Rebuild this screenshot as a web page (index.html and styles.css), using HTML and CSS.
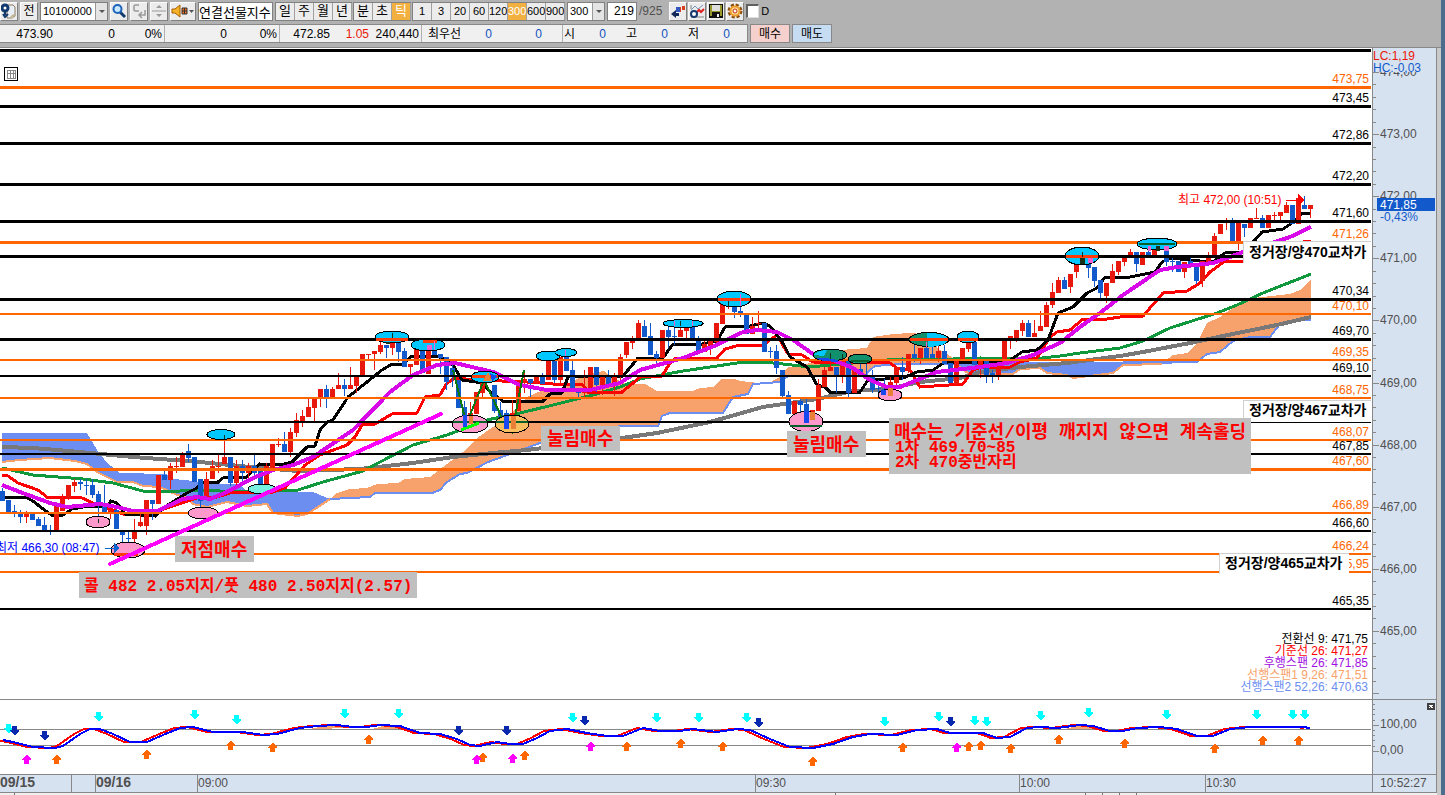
FILE: index.html
```html
<!DOCTYPE html>
<html lang="ko">
<head>
<meta charset="utf-8">
<title>연결선물지수</title>
<link rel="stylesheet" href="styles.css">
</head>
<body>
<div class="window">
<header class="toolbar">
  <button class="tool" aria-label="설정"><svg width="16" height="16" viewBox="0 0 16 16"><path d="M6 2h6l2 2v9l-3 2H6z" fill="#e8eef6" stroke="#8a7a60"/><path d="M9 15q1-4 5-4l-2 4z" fill="#c8b898"/><circle cx="4" cy="5" r="3" fill="#fff" stroke="#123a6e" stroke-width="3"/><path d="M4 9v3M2 11l2 3 3-3" fill="none" stroke="#123a6e" stroke-width="2"/></svg></button>
  <button class="tool">전</button>
  <div class="combo code"><select aria-label="종목코드"><option>10100000</option></select><i class="arrow"></i></div>
  <button class="tool" aria-label="검색"><svg width="16" height="16" viewBox="0 0 16 16"><path d="M9 9l5 5" stroke="#123a6e" stroke-width="3"/><circle cx="6.500" cy="6" r="4" fill="#c8e8ff" stroke="#1b62b8" stroke-width="2"/></svg></button>
  <button class="tool" aria-label="이전"><svg width="16" height="16" viewBox="0 0 16 16"><path d="M8 2H4L3 3v4l1 1h4M14 7v5H9M11 9l-3 3 3 3" fill="none" stroke="#999" stroke-width="1.500"/></svg></button>
  <button class="tool" aria-label="증감"><svg width="16" height="16" viewBox="0 0 16 16"><path d="M5 5l3-3 3 3zM5 11h6l-3 3z" fill="#999"/><path d="M1 8h14" stroke="#999"/></svg></button>
  <button class="tool wide" aria-label="소리"><svg width="26" height="16" viewBox="0 0 26 16"><path d="M2 6h3l5-4v12l-5-4H2z" fill="#f5b428" stroke="#a85c00"/><path d="M12 5h5v6h-5z" fill="#f07020" stroke="#333"/><path d="M12 8h5M14.500 5v6" stroke="#333"/><path d="M19 7h5l-2.500 3z" fill="#555"/></svg></button>
  <input class="name" aria-label="종목명" value="연결선물지수">
  <div class="group"><button>일</button><button>주</button><button>월</button><button>년</button></div>
  <div class="group"><button>분</button><button>초</button><button class="on">틱</button></div>
  <div class="group num"><button>1</button><button>3</button><button>20</button><button>60</button><button>120</button><button class="on">300</button><button>600</button><button>900</button></div>
  <div class="combo period"><select aria-label="주기"><option>300</option></select><i class="arrow"></i></div>
  <input class="count" aria-label="봉 개수" value="219"><span class="total">/925</span>
  <div class="icons">
    <button class="tool" aria-label="차트 이동"><svg width="16" height="16" viewBox="0 0 16 16"><path d="M8 4h3v5H8zM12 3h3v4h-3z" fill="#d84020"/><path d="M6 4h4v5H6z" fill="#3058c0"/><path d="M1 11l5-4v3h3v3H6v2z" fill="#102858"/></svg></button>
    <button class="tool" aria-label="지표"><svg width="16" height="16" viewBox="0 0 16 16"><path d="M2 2v4M2 14h13" stroke="#888"/><path d="M2 7l4-4 3 3 5-4" fill="none" stroke="#7799bb"/><path d="M7 10l3-3 2 2 3-3" fill="none" stroke="#e02020" stroke-width="2"/><circle cx="5" cy="11" r="3" fill="#fff" stroke="#123a6e" stroke-width="2"/></svg></button>
    <button class="tool" aria-label="저장"><svg width="16" height="16" viewBox="0 0 16 16"><path d="M1 1h14v14H1z" fill="#111"/><path d="M2 2h2v11H2zM12 2h2v11h-2zM4 8h8v1H4z" fill="#98982a"/><path d="M4 2h8v6H4z" fill="#ddd"/><path d="M9 11h2v3H9z" fill="#eee"/></svg></button>
    <button class="tool" aria-label="환경설정"><svg width="16" height="16" viewBox="0 0 16 16"><circle cx="8" cy="8" r="6" fill="none" stroke="#8a5010" stroke-width="3" stroke-dasharray="3 1.700"/><circle cx="8" cy="8" r="4.500" fill="#fbe0a0" stroke="#f0a030" stroke-width="2"/><circle cx="8" cy="8" r="2" fill="#fff" stroke="#c83010"/></svg></button>
  </div>
  <label class="check"><input type="checkbox">D</label>
</header>
<div class="quote">
  <div class="cells">
    <span class="c53">473.90</span><span class="c62">0</span><span class="c49 sep">0%</span>
    <span class="c62">0</span><span class="c53 sep">0%</span>
    <span class="c49">472.85</span><span class="c39 up">1.05</span><span class="c53 sep">240,440</span>
    <span class="c39">최우선</span><span class="c31 down">0</span><span class="c49 down">0</span><span class="c21 sep"></span>
    <span class="c12">시</span><span class="c31 down">0</span><span class="c31">고</span><span class="c31 down">0</span><span class="c31">저</span><span class="c31 down">0</span>
  </div>
  <button class="buy">매수</button>
  <button class="sell">매도</button>
</div>
<main class="board">
<svg class="chart" viewBox="0 48 1437 747" role="img" aria-label="연결선물지수 틱 차트">
  <rect class="paper" x="0" y="48" width="1373" height="745"/>
  <g class="clouds">
    <polygon class="bear" points="2,433 87,433 97,450 107,463 120,473 167,474 170,479 187,480 200,483 240,484 247,492 313,492 330,499 315,509 307,514 298,516 273,513 267,504 247,506 227,502 207,507 193,504 187,497 177,495 160,487 143,486 133,482 117,482 97,472 87,464 75,461 50,458 20,460 2,462"/>
    <polygon class="bull" points="330,499 337,493 350,489 367,488 377,484 398,483 405,479 430,477 443,467 463,452 477,438 493,427 510,415 527,397 543,390 563,388 580,377 597,372 605,371 610,377 628,384 645,384 657,391 693,391 700,388 713,387 722,379 735,379 740,381 767,384 780,377 788,367 800,366 827,358 840,350 867,348 873,337 893,334 910,333 933,335 937,348 952,357 955,363 900,364 875,366 870,370 865,376 788,376 780,382 753,384 748,394 733,397 723,413 670,413 662,416 658,426 620,426 540,443 513,453 488,462 467,473 460,474 447,482 440,490 432,493 375,493 370,497"/>
    <polygon class="bear" points="955,363 1200,362 1162,364 1123,365 1113,373 1097,375 1073,378 1067,375 1047,373 1040,368 1020,369 1013,374 970,374 963,370"/>
    <polygon class="bull" points="1162,363 1173,355 1187,353 1197,343 1207,323 1220,317 1237,305 1253,298 1290,294 1300,290 1311,279 1311,320 1300,320 1290,323 1280,324 1270,337 1233,341 1220,352 1207,354 1197,362"/>
    <polyline class="span1" points="2,462 20,460 50,458 75,461 87,464 97,472 117,482 133,482 143,486 160,487 177,495 187,497 193,504 207,507 227,502 247,506 267,504 273,513 298,516 307,514 315,509 330,499"/>
    <polyline class="span2" points="330,499 370,497 375,493 432,493 440,490 447,482 460,474 467,473 488,462 513,453 540,443 620,426 658,426 662,416 670,413 723,413 733,397 748,394 753,384 780,382 788,376"/>
    <polyline class="span2" points="865,376 870,370 875,366 900,364 1197,362 1207,354 1220,352 1233,341 1250,337 1270,337 1280,324 1290,323 1300,320 1311,320"/>
    <polyline class="span1" points="955,363 963,370 970,374 1013,374 1020,369 1040,368 1047,373 1067,375 1073,378 1097,375 1113,373 1123,365 1162,364"/>
  </g>
  <polyline class="ma120" points="2,447 33,448 80,452 133,457 200,462 250,467 298,471 360,469 413,463 453,457 493,453 527,450 622,438 657,433 710,422 763,407 797,402 817,399 853,391 887,389 920,382 960,378 980,372 1020,367 1067,363 1120,356 1143,352 1190,343 1223,336 1277,325 1311,317"/>
  <polyline class="ma60" points="2,468 33,475 83,479 113,483 143,491 180,491 207,490 233,492 267,491 298,490 323,482 363,471 380,462 413,445 447,435 487,420 520,413 553,405 593,395 620,387 640,379 683,371 737,363 763,362 783,364 810,367 830,365 887,360 953,359 980,358 1033,359 1060,356 1080,353 1120,348 1143,341 1170,328 1217,313 1237,305 1263,293 1311,274"/>
  <polyline class="base" points="2,475 8,476 18,483 38,490 47,497 80,497 97,505 113,510 123,514 150,514 158,511 197,498 217,497 230,493 273,492 285,488 305,465 320,455 347,445 355,437 362,425 375,424 392,414 417,413 425,397 440,395 447,383 455,378 477,380 527,382 553,384 583,385 588,392 622,392 633,383 640,377 662,376 670,363 675,359 717,358 725,349 740,345 763,345 777,335 788,354 802,355 813,362 890,363 897,368 910,370 920,387 963,384 973,370 982,367 1010,367 1020,362 1037,358 1050,337 1057,332 1070,330 1083,319 1107,319 1120,317 1143,316 1163,293 1187,291 1200,283 1210,272 1225,261 1245,261"/>
  <polyline class="turn" points="0,497 25,497 33,501 43,509 53,516 63,515 72,509 83,507 107,506 111,501 117,503 125,514 155,516 163,508 187,493 197,488 203,482 218,482 223,478 247,477 253,470 260,464 280,465 292,462 307,447 315,446 320,430 327,422 333,420 348,397 367,382 382,370 392,364 403,364 412,356 437,356 447,360 453,365 462,380 483,383 488,390 503,401 543,401 550,394 562,393 568,377 623,376 638,358 663,358 673,344 702,344 717,341 725,327 750,326 763,323 770,326 783,343 790,357 807,367 817,385 825,387 830,392 860,392 868,380 903,378 917,372 933,370 945,362 987,362 1010,360 1022,352 1037,350 1048,340 1058,313 1073,307 1087,293 1097,288 1105,277 1130,277 1155,272 1162,262 1170,258 1200,261 1213,262 1225,253 1243,252 1255,240 1262,232 1283,229 1292,223 1303,213 1311,213"/>
  <g id="candles"></g>
  <polyline class="ma20" points="2,485 20,492 50,503 67,507 100,504 117,507 133,511 157,511 183,499 197,497 210,499 227,492 253,478 273,470 293,465 313,457 353,430 390,392 413,375 437,365 455,363 493,372 520,385 547,390 590,390 620,383 640,370 683,358 717,345 743,332 757,330 777,332 793,340 813,354 833,360 853,368 870,380 887,387 900,387 937,372 980,367 1007,363 1033,355 1060,343 1080,327 1100,313 1123,295 1160,270 1177,267 1213,263 1230,257 1243,252 1275,242 1290,237 1311,227"/>
  <polyline class="wave" points="453,370 463,410 466,425 484,380 502,418 512,432 524,370"/>
  <path class="mark" d="M1303 240.500h8"/>
  <g id="levels"></g>
  <g class="spots">
    <g class="sky"><ellipse cx="221" cy="434.500" rx="14" ry="5"/><ellipse cx="392" cy="337" rx="17" ry="6"/><ellipse cx="428" cy="345" rx="17" ry="6"/><ellipse cx="485" cy="377" rx="14" ry="6"/><ellipse cx="548" cy="356" rx="12" ry="5"/><ellipse cx="566" cy="352.500" rx="11" ry="4"/><ellipse cx="683" cy="323.500" rx="20" ry="4"/><ellipse cx="734" cy="299" rx="17" ry="8"/><ellipse cx="968" cy="337" rx="11" ry="6"/><ellipse cx="1082" cy="256" rx="17" ry="9"/><ellipse cx="1157" cy="244" rx="20" ry="6"/></g>
    <ellipse class="mint" cx="262" cy="489" rx="14" ry="5"/>
    <g class="forest"><ellipse cx="830" cy="355" rx="17" ry="6"/><ellipse cx="860" cy="359" rx="12" ry="5"/><ellipse cx="929" cy="339.500" rx="20" ry="7"/></g>
    <path class="skyfill" d="M927 333q20 0 21 7q-2 6-20 7zM814 355q2-4 13-5l-3 6z"/>
    <g class="rose"><ellipse cx="98" cy="522" rx="12" ry="6"/><ellipse cx="128" cy="550" rx="17" ry="8"/><ellipse cx="203" cy="513" rx="15" ry="6"/><ellipse cx="470" cy="424" rx="18" ry="9"/><ellipse cx="806" cy="421.500" rx="17" ry="10"/><ellipse cx="890" cy="395" rx="12" ry="6"/></g>
    <ellipse class="amber" cx="512" cy="424" rx="17" ry="9"/>
    <path class="flare" d="M376 339h32M472 376h26M718 299h32M910 339h38M958 339h20M1066 256h32M114 554h24M423 341h14"/>
    <path class="moss" d="M1139 244h36M453 422h34M496 422h32M790 426h32M851 361h18"/>
    <path class="lime" d="M461 430l18-7"/>
    <path class="stick" d="M392.500 333v5M224.500 435v4M680.500 321v5M728.500 301v6M1082.500 252v5M830.500 353v6M842.500 354v5M98.500 519v4"/>
    <path class="petal" d="M427 345h5v5h-5zM434 341h1v9h-1zM1088 258h5v5h-5zM1148 246h3v5h-3zM1164 246h5v5h-5zM740 294h1v12h-1zM674 321h1v5h-1zM692 321h1v5h-1zM565 350h1v6h-1zM926 342h1v5h-1z"/>
    <path class="ink" d="M1080 258h5v6h-5zM1156 246h4v5h-4zM386 342h4v2h-4z"/>
    <path class="royal" d="M463 415h4v12h-4zM504 416h5v13h-5zM804 411h5v12h-5zM881 390h5v5h-5zM816 358l10 0 12 2v2l-15-1zM490 373l7 3-5 5z"/>
    <path class="rust" d="M469 416h4v8h-4zM511 416h5v13h-5zM810 412h5v8h-5zM888 388h5v8h-5zM483 381l5-9 4 9z"/>
  </g>
  <path class="trend" d="M110 564L441 414"/>
  <path class="point" d="M1298 194l7 6-7 6zM1286 200h12v1h-12z"/>
  <path class="point low" d="M114 543l6 5-6 5zM105 548h9v1h-9z"/>
  <g class="text">
    <text class="max" x="1178" y="204">최고 472,00 (10:51)</text>
    <text class="min" x="-4" y="552">최저 466,30 (08:47)</text>
  </g>
  <g class="station">
    <rect x="1243" y="241" width="128" height="22"/><path d="M1243.500 263v-22H1371"/><text x="1249" y="257">정거장/양470교차가</text>
    <rect x="1243" y="400" width="128" height="22"/><path d="M1243.500 421v-21H1371"/><text x="1249" y="415">정거장/양467교차가</text>
    <rect x="1219" y="553" width="130" height="22"/><path d="M1219.500 574v-21H1349"/><text x="1225" y="568">정거장/양465교차가</text>
  </g>
  <path class="over" d="M1243 422.500H1371"/>
  <g class="note">
    <rect x="541" y="426" width="79" height="25"/><text class="big" x="547" y="445">눌림매수</text>
    <rect x="787" y="431" width="79" height="26"/><text class="big" x="793" y="451">눌림매수</text>
    <rect x="175" y="536" width="79" height="26"/><text class="big" x="181" y="556">저점매수</text>
    <rect x="889" y="418" width="362" height="56"/><text class="big" x="894" y="438">매수는 기준선/이평 깨지지 않으면 계속홀딩</text><text x="895" y="452">1차 469.70~85</text><text x="895" y="467">2차 470중반자리</text>
    <rect x="79" y="572" width="338" height="26"/><text x="84" y="591">콜 482 2.05지지/풋 480 2.50지지(2.57)</text>
  </g>
  <g class="legend">
    <text x="1368" y="643">전환선 9: 471,75</text><text class="l2" x="1368" y="655">기준선 26: 471,27</text><text class="l3" x="1368" y="667">후행스팬 26: 471,85</text><text class="l4" x="1368" y="679">선행스팬1 9,26: 471,51</text><text class="l5" x="1368" y="691">선행스팬2 52,26: 470,63</text>
  </g>
  <g class="gridicon"><rect x="4.500" y="67.500" width="13" height="13"/><path d="M7 70.500h9M7 73.500h9M7 78.500h9M7.500 70v9M10.500 70v9M13.500 70v9M15.500 70v9"/></g>
  <g class="osc">
    <path class="frame" d="M0 699.500H1437M0 729.500H1371M0 745.500H1371"/>
    <path class="bull" d="M310 729l18-4h20l5 3zM372 729l15-4h12l10 4zM1065 729l16-4 15 4z"/>
    <use href="#signal" class="fast" x="-6"/>
    <polyline id="signal" class="wire" points="3,740 13,742 33,747 55,748 63,746 80,734 90,729 100,729 113,734 130,742 147,742 163,735 180,728 193,727 213,732 243,732 263,735 277,734 300,728 317,726 337,725 353,727 367,727 380,725 400,726 420,733 440,734 457,739 470,745 480,746 497,742 510,744 523,744 537,738 550,731 567,729 587,733 607,736 623,736 643,728 660,731 680,731 693,729 717,732 737,729 750,730 770,739 790,747 813,748 833,744 853,737 870,734 897,735 917,730 937,729 950,733 983,733 997,738 1010,737 1027,728 1040,727 1057,728 1080,725 1093,726 1110,731 1123,731 1137,728 1160,727 1177,729 1197,736 1213,736 1230,729 1250,727 1303,727 1310,728"/>
    <g id="arrows"></g>
  </g>
  <g class="axis">
    <rect x="1373" y="48" width="64" height="745"/><rect x="0" y="775" width="1437" height="18"/>
    <path class="frame" d="M1372.500 48V792M1436.500 48V792M0 774.500H1437M0 792.500H1437M1373 699.500H1437M71.500 775v17M95.500 775v17M197.500 775v17M755.500 775v17M1019.500 775v17M1205.500 775v17"/>
    <g id="ticks"></g>
    <text x="1380" y="76">474,00</text><rect x="1374" y="49" width="61" height="23"/>
    <text class="lc" x="1373" y="60">LC:1,19</text><text class="hc" x="1373" y="72">HC:-0,03</text>
    <text x="1380" y="200">472,00</text><rect class="now" x="1377" y="198" width="58" height="13"/><text class="nowtext" x="1380" y="209">471,85</text><text class="hc" x="1380" y="221">-0,43%</text>
    <text x="1380" y="728">100,00</text><text x="1380" y="754">0,00</text>
    <text class="day" x="0" y="787">09/15</text><text class="day" x="96" y="787">09/16</text>
    <text x="198" y="787">09:00</text><text x="756" y="787">09:30</text><text x="1020" y="787">10:00</text><text x="1206" y="787">10:30</text><text x="1380" y="787">10:52:27</text>
    <rect class="close" x="1427" y="703" width="8" height="7"/><path class="x" d="M1429 705l4 3M1433 705l-4 3"/>
  </g>
  <rect class="foot" x="0" y="793" width="1437" height="2"/>
  <path class="foottabs" d="M14.500 793v2M835.500 793v2M1085.500 793v2M1102.500 793v2M1119.500 793v2M1136.500 793v2"/>
</svg>
</main>
</div>
<script src="chart.js"></script>
</body>
</html>
```

FILE: styles.css
```css
* { box-sizing: border-box; }
body { margin: 0; background: #fff; font: 12px "Liberation Sans", "Noto Sans CJK KR", sans-serif; color: #000; }
.window { border-right: 4px solid #4c6e8c; background: #b2b2b2; min-height: 100vh; }
.toolbar { display: flex; align-items: center; height: 22px; gap: 2px; overflow: hidden; }
button, input, select { font: inherit; color: inherit; margin: 0; border-radius: 0; }
button { padding: 0; line-height: 16px; }
.tool { width: 18px; height: 19px; flex: none; display: flex; align-items: center; justify-content: center; background: #ececec; border: 1px solid #fafafa; border-right-color: #808080; border-bottom-color: #808080; }
.tool svg { flex: none; }
.wide { width: 26px; }
.combo { display: flex; height: 19px; border: 1px solid #808080; background: #fff; flex: none; }
.combo select { appearance: none; border: 0; background: #fff; padding: 0 2px; flex: 1; min-width: 0; font-size: 11px; outline: 0; }
.code { width: 68px; }
.period { width: 38px; }
.arrow { width: 12px; background: #e4e4e4; border-left: 1px solid #999; display: flex; align-items: center; justify-content: center; }
.arrow::after { content: ""; border: 3px solid transparent; border-top-color: #555; border-bottom: 0; }
.name { width: 75px; height: 19px; padding: 0; border: 1px solid #808080; font-size: 13px; background: #fff; flex: none; }
.group { display: flex; height: 19px; flex: none; border: 1px solid #808080; border-right: 0; background: #ececec; }
.group + .group { margin-left: -1px; }
.group button { width: 19px; background: #ececec; border: 0; border-right: 1px solid #a0a0a0; font-size: 13px; }
.group.num button { font-size: 11px; overflow: hidden; }
.group .on, .group.num .on { background: #f2b040; color: #fff; }
.count { width: 30px; height: 19px; padding: 0 2px; border: 1px solid #808080; text-align: right; flex: none; }
.total { color: #505050; }
.icons { display: flex; gap: 1px; margin-left: 5px; }
.check { display: flex; align-items: center; gap: 2px; font-size: 11px; }
.check input { appearance: none; width: 13px; height: 14px; background: #fff; border: 2px solid #606060; border-right: 1px solid #ddd; border-bottom: 1px solid #ddd; }
.quote { display: flex; gap: 2px; height: 26px; padding: 2px 0 4px; border-bottom: 1px solid #888; }
.cells { display: flex; align-items: stretch; width: 748px; background: #f0f0f0; border: 1px solid #888; border-left: 0; line-height: 18px; }
.cells span { text-align: right; white-space: nowrap; }
.sep { border-right: 1px solid #b0b0b0; padding-right: 2px; }
.c12 { width: 12px; } .c21 { width: 21px; } .c31 { width: 31px; } .c39 { width: 39px; } .c49 { width: 50px; } .c53 { width: 53px; } .c62 { width: 62px; }
.up { color: #e81808; } .down { color: #1050c0; }
.quote button { width: 40px; border: 1px solid #888; }
.buy { background: #f5d0cc; } .sell { background: #c6dcf2; }
.board { border-right: 4px solid #cacaca; background: #fff; }
.chart { display: block; width: 100%; height: auto; shape-rendering: crispEdges; }
.chart polyline { fill: none; }
.paper { fill: #fff; }
.bear { fill: #6c8ef0; } .bull { fill: #f7a26c; }
.chart .span1 { stroke: #f7a26c; stroke-width: 2; } .chart .span2 { stroke: #6c8ef0; stroke-width: 2; }
.ma120 { stroke: #787878; stroke-width: 4; }
.ma60 { stroke: #10983c; stroke-width: 3; }
.base { stroke: #f00; stroke-width: 3; }
.turn { stroke: #000; stroke-width: 3; }
.ma20 { stroke: #d808e8; stroke-width: 4; }
.wave { stroke: #087810; stroke-width: 2; }
.mark { stroke: #f00; stroke-width: 1; }
.rise { fill: #e8180c; } .fall { fill: #125acc; }
.black { fill: #000; } .orange { fill: #ff6600; }
.price { font-size: 12px; text-anchor: end; }
.spots ellipse { stroke: #000; stroke-width: 1; }
.sky, .skyfill { fill: #00c8ff; } .mint { fill: #78f0e0; } .forest { fill: #10906c; } .rose { fill: #ff99cc; } .amber { fill: #f8be60; }
.flare { stroke: #ff3c08; stroke-width: 3; } .moss { stroke: #046028; stroke-width: 2; } .lime { stroke: #0f0; stroke-width: 3; }
.stick { stroke: #103018; } .petal { fill: #f060d0; } .ink { fill: #183018; } .royal { fill: #1848f0; } .rust { fill: #e88038; }
.trend { stroke: #f0f; stroke-width: 4; stroke-linecap: round; }
.point, .max { fill: #f00; } .low { fill: #0868d0; } .min { fill: #00f; }
.station rect { fill: #fff; } .station path { stroke: #d0d0d0; fill: none; }
.station text { font-size: 14px; font-weight: bold; }
.over { stroke: #000; stroke-width: 1; }
.note rect { fill: #c0c0c0; }
.note text { font: bold 16px "Liberation Mono", "Noto Sans CJK KR", monospace; fill: #f00; white-space: pre; }
.note .big { font-size: 18px; }
.legend text { text-anchor: end; } .l2 { fill: #f00; } .l3 { fill: #a010e0; } .l4 { fill: #f7a26c; } .l5 { fill: #6c8ef0; }
.gridicon { fill: #fff; stroke: #000; } .gridicon path { stroke: #888; }
.frame { stroke: #888; fill: none; }
.wire { stroke-width: 2; stroke: inherit; }
.osc { stroke-width: 2; stroke: #00f; } .osc .frame, .osc .bull { stroke-width: 1; } .osc .bull { stroke: none; } .fast { stroke: #f00; }
#arrows { stroke: none; }
.cyan { fill: #00ffff; } .navy { fill: #0828b0; } .pink { fill: #f0f; }
.axis rect { fill: #d7e2f0; } .axis text { fill: #505050; }
.axis .lc { fill: #e81808; } .axis .hc { fill: #125acc; } .axis .now { fill: #125acc; } .axis .nowtext { fill: #fff; }
.axis .day { font-size: 14px; font-weight: bold; }
.axis .close { fill: #404040; } .x { stroke: #fff; }
#ticks { stroke: #888; } #ticks text { stroke: none; }
.foot { fill: #f0f0f0; } .foottabs { stroke: #707070; }
```

FILE: chart.js
```js
const NS = "http://www.w3.org/2000/svg";
function add(parent, tag, attrs, text) {
  const el = document.createElementNS(NS, tag);
  for (const key in attrs) el.setAttribute(key, attrs[key]);
  if (text) el.textContent = text;
  parent.appendChild(el);
}

// One candle per entry: direction, high, body top, body bottom, low.
const candles = `b488 491 501 501,b500 500 512 512,b505 511 513 517,b510 514 517 523,r511 514 517 523,b514 514 520 520,b517 519 526 526,b517 525 530 530,b525 530 531 535,r506 506 530 530,
r494 499 511 511,r485 485 498 500,r479 482 486 492,b479 482 484 490,b479 485 486 495,b479 485 495 498,b491 494 503 523,b485 503 512 512,r507 510 513 519,b505 510 529 529,
b530 531 535 550,b532 538 539 545,r519 530 539 548,r510 522 526 527,r500 500 526 535,b500 500 504 520,r475 475 504 504,b471 475 480 480,r463 466 480 489,r457 466 467 473,
r452 455 467 467,b444 451 458 462,b457 457 482 482,b479 479 501 519,r472 479 498 498,r460 466 479 479,r455 466 467 473,r435 457 464 464,b457 457 483 486,r460 466 483 486,
b460 466 473 486,r463 466 473 482,b455 466 473 476,b471 471 486 492,r463 466 485 491,r444 444 468 468,r438 444 445 447,b432 444 452 452,r428 432 452 457,r413 420 433 437,
r410 416 421 427,r398 407 417 417,r398 398 408 421,r389 389 398 407,b385 389 397 408,r387 389 397 397,r373 385 389 389,b379 385 389 396,r367 385 389 389,r376 376 386 393,
r354 354 375 375,r354 354 355 360,r351 351 354 370,r342 345 352 354,b345 345 348 358,r333 342 348 355,b342 342 352 362,b348 351 367 367,r364 364 367 379,r347 347 365 365,
b345 345 373 373,r348 348 374 374,b340 346 355 355,b354 354 358 374,b357 357 382 390,b365 368 375 387,b380 380 408 408,b401 407 427 427,r402 413 425 425,r392 392 414 414,
r380 380 393 397,r375 375 381 381,b385 385 411 413,b402 410 417 425,b410 413 430 430,r400 413 430 433,r382 382 411 411,r370 379 382 393,b379 379 383 397,r376 376 383 383,
b373 376 384 384,r360 360 380 380,b360 360 380 383,r357 357 380 383,b357 357 371 371,b360 370 390 390,b388 389 393 397,r370 388 393 397,r367 367 392 392,b367 367 385 392,
r376 376 386 395,b370 376 386 386,r373 376 386 396,r354 357 377 385,r342 342 355 358,r336 341 343 349,r320 323 338 338,b320 326 337 337,b323 336 355 355,b351 354 358 367,
r330 330 358 358,b327 330 337 348,b327 336 337 345,r323 330 337 337,r323 326 331 338,b327 327 338 338,b336 338 352 352,r340 344 352 352,r341 341 346 355,r323 323 342 346,
r302 304 324 324,r302 305 306 309,b302 307 312 318,b295 311 313 317,b314 314 334 334,r317 326 334 334,r311 323 324 330,b323 323 352 352,b347 351 352 358,b345 351 368 374,
b370 370 396 397,b391 395 414 414,r401 401 414 414,b397 401 405 414,b399 404 424 424,r410 410 420 430,r379 385 411 411,r367 370 387 387,r354 367 371 371,b367 367 377 393,
r361 361 376 383,b361 361 393 397,r369 369 393 393,b361 369 376 376,b363 375 376 378,b370 376 390 393,b380 388 389 392,b379 389 396 396,r377 382 396 396,r367 367 383 385,
b357 367 372 380,r354 354 371 373,b343 354 358 362,r348 348 358 364,b342 348 358 358,b347 354 358 358,r341 351 358 362,b345 351 364 364,b363 363 383 383,r360 360 384 386,
r348 348 361 361,r342 342 349 352,b342 342 365 365,r359 359 365 378,b360 360 375 383,b370 373 375 383,r364 364 376 380,r341 341 364 364,r336 336 341 349,r330 330 338 342,
r320 323 331 336,b320 323 337 337,r320 333 337 337,r311 326 331 331,r302 305 327 327,r283 292 305 308,r277 280 293 293,b277 280 289 289,r274 274 287 293,r263 263 272 278,
r252 257 263 263,b263 263 268 278,b267 267 281 287,b280 280 293 298,r283 283 296 303,r264 271 283 283,r261 261 272 275,r258 258 262 266,r249 252 257 257,b252 252 264 272,
r252 252 265 265,b250 252 255 255,r247 247 255 255,r244 247 248 250,b249 249 262 266,b258 261 262 272,b261 261 272 272,r262 262 272 278,b258 261 265 265,b263 263 281 284,
r261 261 281 287,r252 255 262 262,r233 236 256 256,r224 224 234 234,r218 221 223 230,b218 220 241 241,r223 223 241 250,b224 224 228 237,r218 218 228 228,r208 218 219 219,
b215 218 228 228,r215 215 228 228,r212 215 216 220,r212 212 216 220,r202 205 213 213,b205 205 224 224,r198 198 224 224,b196 205 209 209,r205 205 209 218`.split(",");
const candleLayer = document.getElementById("candles");
candles.forEach((entry, i) => {
  const item = entry.trim();
  const [high, top, bottom, low] = item.slice(1).split(" ").map(Number);
  const x = 2 + i * 6;
  const cls = item[0] === "r" ? "rise" : "fall";
  add(candleLayer, "rect", { class: cls, x: x, y: high, width: 1, height: low - high });
  add(candleLayer, "rect", { class: cls, x: x - 2, y: top, width: 5, height: Math.max(1, bottom - top) });
});

// Price levels: top edge, thickness, colour, label.
const levels = [
  [49, 3, "black", ""], [86, 3, "orange", "473,75"], [105, 3, "black", "473,45"], [142, 3, "black", "472,86"],
  [183, 3, "black", "472,20"], [220, 3, "black", "471,60"], [241, 3, "orange", "471,26"], [255, 3, "black", ""],
  [298, 3, "black", "470,34"], [313, 2, "orange", "470,10"], [338, 3, "black", "469,70"], [359, 2, "orange", "469,35"],
  [375, 2, "black", "469,10"], [397, 2, "orange", "468,75"], [421, 2, "black", ""], [439, 2, "orange", "468,07"],
  [453, 2, "black", "467,85"], [468, 3, "orange", "467,60"], [512, 2, "orange", "466,89"], [530, 2, "black", "466,60"],
  [553, 2, "orange", "466,24"], [571, 2, "orange", "465,95"], [608, 2, "black", "465,35"]
];
const levelLayer = document.getElementById("levels");
levels.forEach(([y, , cls, label]) => {
  if (label) add(levelLayer, "text", { class: "price " + cls, x: 1369, y: y - 3 }, label);
});
levels.forEach(([y, h, cls]) => add(levelLayer, "rect", { class: cls, x: 0, y: y, width: 1371, height: h }));

// Signal arrows: centre and top edge.
const arrows = {
  "cyan down": "8 724,98 712,194 710,236 715,344 709,398 709,572 713,656 713,698 713,746 713,884 717,938 712,974 716,986 717,1040 711,1088 708,1166 710,1256 710,1292 710,1304 710",
  "navy down": "14 726,44 731,458 726,506 726,584 716,758 718,950 717",
  "orange up": "56 755,146 750,230 741,272 743,368 735,482 753,524 751,626 742,680 739,722 742,812 757,902 743,968 742,980 741,1010 744,1058 735,1124 739,1214 744,1262 736,1298 736",
  "pink up": "26 755,476 755,512 754,590 742,956 743"
};
const arrowLayer = document.getElementById("arrows");
for (const kind in arrows) {
  const [cls, dir] = kind.split(" ");
  arrows[kind].split(",").forEach(pair => {
    const [x, y] = pair.split(" ").map(Number);
    const d = dir === "down"
      ? `M${x - 2} ${y}h5v4h2v1l-4 4h-1l-4-4v-1h2z`
      : `M${x} ${y}h1l4 4v1h-2v4h-5v-4h-2v-1z`;
    add(arrowLayer, "path", { class: cls, d: d });
  });
}

const tickLayer = document.getElementById("ticks");
for (let n = 0; n <= 50; n++) {
  const y = Math.round(72 + n * 12.42) + 0.5;
  add(tickLayer, "path", { d: `M1373 ${y}h${n % 5 ? 3 : 6}` });
  if (n % 5 === 0 && n >= 5 && n < 50 && n !== 10) {
    add(tickLayer, "text", { x: 1380, y: Math.round(y + 3) }, `${474 - n / 5},00`);
  }
}
for (let n = 0; n <= 9; n++) {
  const y = Math.round(704 + n * 5.2) + 0.5;
  add(tickLayer, "path", { d: `M1373 ${y}h${n === 4 || n === 9 ? 6 : 2}` });
}
```
